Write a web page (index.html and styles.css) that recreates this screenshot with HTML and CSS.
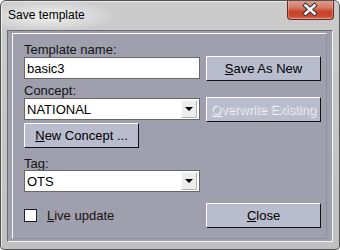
FILE: index.html
```html
<!DOCTYPE html>
<html lang="en">
  <head>
    <meta charset="utf-8">
    <title>Save template</title>
    <link rel="stylesheet" href="styles.css">
  </head>
  <body>
    <div class="window">
      <div class="titlebar">
        <span class="title">Save template</span>
        <div class="close-btn">
          <svg width="45" height="18" viewBox="0 0 45 18">
            <path d="M17.5 5.5 L26.5 13.5 M26.5 5.5 L17.5 13.5" stroke="#3b3b40" stroke-width="4.6" stroke-linecap="square" fill="none"/>
            <path d="M17.5 5.5 L26.5 13.5 M26.5 5.5 L17.5 13.5" stroke="#ffffff" stroke-width="2.4" stroke-linecap="square" fill="none"/>
          </svg>
        </div>
      </div>

      <div class="client">
        <div class="frame">
          <div class="label">Template name:</div>
          <div class="row">
            <div class="field">basic3</div>
            <button class="btn"><u>S</u>ave As New</button>
          </div>

          <div class="label">Concept:</div>
          <div class="row">
            <div class="field combo">NATIONAL<span class="arrow"></span></div>
            <button class="btn disabled"><u>O</u>verwrite Existing</button>
          </div>

          <button class="btn new-concept"><u>N</u>ew Concept ...</button>

          <div class="label tag-label">Tag:</div>
          <div class="field combo">OTS<span class="arrow"></span></div>

          <div class="row bottom-row">
            <label class="check"><span class="box"></span><span><u>L</u>ive update</span></label>
            <button class="btn"><u>C</u>lose</button>
          </div>
        </div>
      </div>
    </div>
  </body>
</html>
```

FILE: styles.css
```css
body {
  margin: 0;
  background: #ffffff;
  font-family: "Liberation Sans", Arial, sans-serif;
}

/* fenetre */
.window {
  width: 340px;
  height: 250px;
  box-sizing: border-box;
  border: 1px solid #525252;
  border-radius: 6px 6px 4px 4px;
  background:
    radial-gradient(ellipse 70px 16px at 48px 15px, rgba(255,255,255,0.75), rgba(255,255,255,0) 100%),
    linear-gradient(#cbcbcb, #c0c0c0);
  box-shadow: inset 1px 1px 0 rgba(255,255,255,0.6);
  display: flex;
  flex-direction: column;
  overflow: hidden;
}

.titlebar {
  height: 29px;
  display: flex;
  justify-content: space-between;
  align-items: flex-start;
}

.title {
  font-size: 12px;
  line-height: 14px;
  padding: 7px 0 0 7px;
  color: #000;
}

.close-btn {
  width: 47px;
  height: 20px;
  box-sizing: border-box;
  margin: -1px 5px 0 0;
  border: 1px solid #6a2b20;
  border-top: none;
  border-radius: 0 0 4px 4px;
  background: linear-gradient(#e3a090 0%, #d67a66 40%, #c6452c 60%, #c9482f 85%, #de7b5c 100%);
  box-shadow: inset 0 0 0 1px rgba(255,255,255,0.25);
}

.close-btn svg {
  display: block;
}

/* zone client */
.client {
  flex: 1;
  margin: 0 6px 7px 6px;
  border: 1px solid;
  border-color: #6b6b6b #f6f6f6 #f6f6f6 #6b6b6b;
  background: #a09fad;
  padding: 2px 5px 2px 4px;
  display: flex;
}

.frame {
  flex: 1;
  border: 1px solid;
  border-color: #fbfbfb #8f8e9b #8f8e9b #fbfbfb;
  padding: 9px 5px 0 11px;
}

.label {
  font-size: 13px;
  line-height: 13px;
  height: 13px;
  color: #141414;
}

.row {
  display: flex;
  gap: 6px;
  align-items: flex-start;
  height: 25px;
}

.row + .label {
  margin-top: 3px;
}

.field {
  width: 176px;
  height: 22px;
  box-sizing: border-box;
  border: 1px solid #686868;
  background: #ffffff;
  padding-left: 2px;
  font-size: 13px;
  color: #000;
  display: flex;
  align-items: center;
  position: relative;
}

.row .field {
  margin-top: 1px;
}

.arrow {
  position: absolute;
  right: 2px;
  top: 1px;
  width: 16px;
  height: 18px;
  box-sizing: border-box;
  border: 1px solid;
  border-color: #fafafa #b4b4b4 #b4b4b4 #fafafa;
  background: #ededed;
}

.arrow::after {
  content: "";
  position: absolute;
  left: 3px;
  top: 6px;
  border-left: 4px solid transparent;
  border-right: 4px solid transparent;
  border-top: 4px solid #000;
}

.btn {
  width: 115px;
  height: 25px;
  box-sizing: border-box;
  border: 1px solid;
  border-color: #ffffff #111111 #111111 #ffffff;
  background: #b9bccd;
  font-family: inherit;
  font-size: 13px;
  color: #000;
  padding: 0;
  text-align: center;
}

.btn.disabled {
  color: #c5c6d3;
  text-shadow: 1px 1px 0 #f3f3f6;
}

.new-concept {
  display: block;
  margin-top: 1px;
}

.tag-label {
  margin-top: 9px;
}

.bottom-row {
  margin-top: 11px;
  align-items: center;
}

.check {
  width: 176px;
  display: flex;
  align-items: center;
  gap: 10px;
  font-size: 13px;
  color: #141414;
}

.box {
  width: 13px;
  height: 13px;
  box-sizing: border-box;
  border: 1px solid #1e1e1e;
  background: #ffffff;
}
```
